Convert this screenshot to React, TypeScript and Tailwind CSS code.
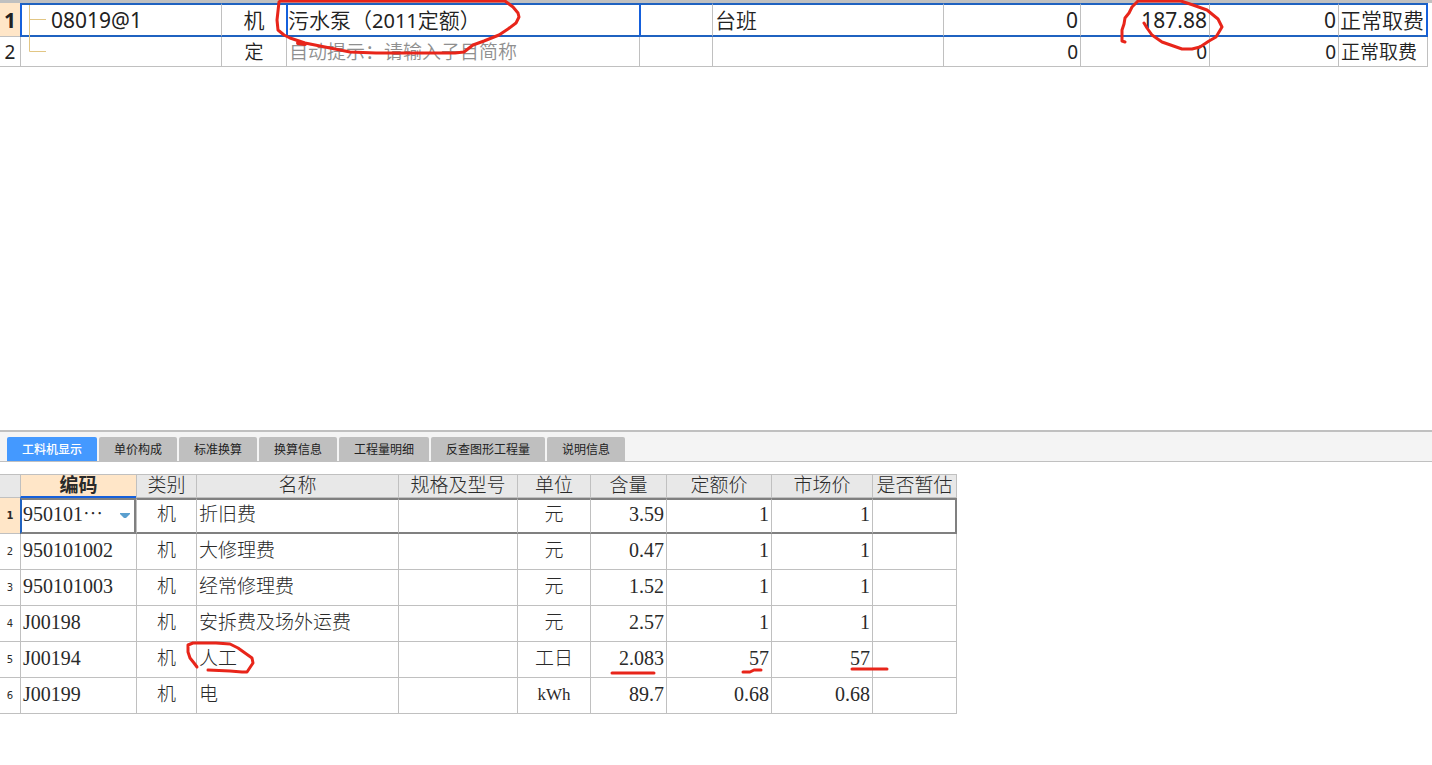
import { useState } from 'react';

const tabs = ['工料机显示', '单价构成', '标准换算', '换算信息', '工程量明细', '反查图形工程量', '说明信息'];

const columns = ['编码', '类别', '名称', '规格及型号', '单位', '含量', '定额价', '市场价', '是否暂估'];

const resources = [
  { code: '950101⋯', name: '折旧费', unit: '元', qty: '3.59', quota: '1', market: '1' },
  { code: '950101002', name: '大修理费', unit: '元', qty: '0.47', quota: '1', market: '1' },
  { code: '950101003', name: '经常修理费', unit: '元', qty: '1.52', quota: '1', market: '1' },
  { code: 'J00198', name: '安拆费及场外运费', unit: '元', qty: '2.57', quota: '1', market: '1' },
  { code: 'J00194', name: '人工', unit: '工日', qty: '2.083', quota: '57', market: '57' },
  { code: 'J00199', name: '电', unit: 'kWh', qty: '89.7', quota: '0.68', market: '0.68' },
];

function ItemTable() {
  const sel = 'border-y-2 border-y-[#1f62c0] border-l border-l-[#c0c0c0]';
  const selBox = 'border-y-2 border-l-2 border-y-[#1f62c0] border-l-[#1560dc]';
  const cell = 'border-b border-l border-[#c0c0c0]';
  return (
    <div className="border-t-3 border-[#c0c0c0] pr-1">
      <table className="w-full table-fixed border-separate border-spacing-0 whitespace-nowrap text-[#222] font-['Noto_Sans','Noto_Sans_CJK_SC',sans-serif]">
        <colgroup>
          <col className="w-[20px]" />
          <col className="w-[201px]" />
          <col className="w-[65px]" />
          <col />
          <col className="w-[73px]" />
          <col className="w-[231px]" />
          <col className="w-[137px]" />
          <col className="w-[129px]" />
          <col className="w-[129px]" />
          <col className="w-[90px]" />
        </colgroup>
        <tbody className="leading-7">
          <tr className="h-[34px] text-[21px]">
            <th scope="row" className="border-b border-[#c0c0c0] bg-[#ffe6c8] p-0 font-bold">1</th>
            <td className={`${selBox} relative p-0 pl-[29px]`}>
              <svg aria-hidden="true" className="absolute top-0 left-[7px]" width="18" height="48" fill="none" stroke="#e2c684">
                <path d="M0.5 0V46.5H17M0.5 14.5H17" />
              </svg>
              08019@1
            </td>
            <td className={`${sel} p-0 text-center font-[350]`}>机</td>
            <td className={`${selBox} p-0 font-[350]`}>污水泵（<span className="text-[20px] font-normal">2011</span>定额）</td>
            <td className={`${selBox} p-0`} />
            <td className={`${sel} p-0 pl-[2px] font-[350]`}>台班</td>
            <td className={`${sel} p-0 pr-[2px] text-right`}>0</td>
            <td className={`${sel} p-0 pr-[2px] text-right`}>187.88</td>
            <td className={`${sel} p-0 pr-[2px] text-right`}>0</td>
            <td className="border-y-2 border-r-2 border-l border-y-[#1f62c0] border-r-[#1560dc] border-l-[#c0c0c0] p-0 pl-px font-[350]">正常取费</td>
          </tr>
          <tr className="h-[30px] text-[19px]">
            <th scope="row" className="border-b border-[#c0c0c0] p-0 font-normal">2</th>
            <td className={`${cell} p-0`} />
            <td className={`${cell} p-0 text-center font-[350]`}>定</td>
            <td className={`${cell} p-0 pl-[2px]`}>
              <input aria-label="子目简称" placeholder="自动提示：请输入子目简称" className="block h-7 w-full bg-transparent p-0 font-[350] outline-none placeholder:text-[#8f8f8f]" />
            </td>
            <td className={`${cell} p-0`} />
            <td className={`${cell} p-0`} />
            <td className={`${cell} p-0 pr-[2px] text-right`}>0</td>
            <td className={`${cell} p-0 pr-[2px] text-right`}>0</td>
            <td className={`${cell} p-0 pr-[2px] text-right`}>0</td>
            <td className={`${cell} border-r p-0 pl-[2px] font-[350]`}>正常取费</td>
          </tr>
        </tbody>
      </table>
    </div>
  );
}

function ResourceTable() {
  return (
    <table className="mt-3 table-fixed w-[957px] border-separate border-spacing-0 whitespace-nowrap text-[#2a2a2a] font-['Liberation_Serif','Noto_Sans_CJK_SC',serif]">
      <colgroup>
        <col className="w-[20px]" />
        <col className="w-[116px]" />
        <col className="w-[60px]" />
        <col className="w-[202px]" />
        <col className="w-[119px]" />
        <col className="w-[73px]" />
        <col className="w-[76px]" />
        <col className="w-[105px]" />
        <col className="w-[101px]" />
        <col className="w-[85px]" />
      </colgroup>
      <thead className="text-[19px] leading-5 font-light">
        <tr className="h-6">
          <td className="border-y border-[#c0c0c0] bg-[#e8e8e8] p-0" />
          {columns.map((c, i) => (
            <th
              key={c}
              scope="col"
              className={
                i === 0
                  ? 'border-t border-b-2 border-l border-[#c0c0c0] border-b-[#1560dc] bg-[#ffe6c8] p-0 font-bold'
                  : 'border-y border-l border-[#c0c0c0] bg-[#e8e8e8] p-0 font-light last:border-r'
              }
            >
              {c}
            </th>
          ))}
        </tr>
      </thead>
      <tbody className="text-[19px] leading-7 font-light">
        {resources.map((r, i) => {
          const on = i === 0;
          const td = on ? 'border-y-2 border-y-[#808080] border-l border-l-[#c0c0c0]' : 'border-b border-l border-[#c0c0c0]';
          const num = 'p-0 pr-[2px] pb-1 text-right text-[20px]';
          return (
            <tr key={r.code} className="h-9">
              <th
                scope="row"
                className={
                  on
                    ? "border-b border-[#c0c0c0] bg-[#ffe6c8] p-0 text-[10px] font-bold font-['DejaVu_Sans',sans-serif]"
                    : "border-b border-[#c0c0c0] p-0 text-[10px] font-normal font-['DejaVu_Sans',sans-serif]"
                }
              >
                {i + 1}
              </th>
              {on ? (
                <td className="relative border-2 border-[#808080] border-l-[#1f62c0] p-0 pb-1">
                  <select aria-label="编码" className="block h-7 w-full appearance-none bg-transparent p-0 pl-px text-[20px] leading-7 outline-none">
                    <option>{r.code}</option>
                  </select>
                  <svg aria-hidden="true" className="pointer-events-none absolute top-[13px] right-1" width="10" height="6">
                    <path d="M0 0H10V1L6 5H4L0 1Z" fill="#5a9fcf" />
                  </svg>
                </td>
              ) : (
                <td className={`${td} p-0 pb-1 pl-[2px] text-[20px]`}>{r.code}</td>
              )}
              <td className={`${td} p-0 pb-[2px] text-center`}>机</td>
              <td className={`${td} p-0 pb-[2px] pl-[2px]`}>{r.name}</td>
              <td className={`${td} p-0`} />
              <td className={r.unit === 'kWh' ? `${td} p-0 pb-[2px] text-center text-[17px]` : `${td} p-0 pb-[2px] text-center`}>{r.unit}</td>
              <td className={`${td} ${num}`}>{r.qty}</td>
              <td className={`${td} ${num}`}>{r.quota}</td>
              <td className={`${td} ${num}`}>{r.market}</td>
              <td
                className={
                  on
                    ? 'border-y-2 border-r-2 border-l border-[#808080] border-l-[#c0c0c0] p-0'
                    : 'border-x border-b border-[#c0c0c0] p-0'
                }
              />
            </tr>
          );
        })}
      </tbody>
    </table>
  );
}

function InkMarks() {
  return (
    <svg
      aria-hidden="true"
      className="pointer-events-none absolute top-0 left-0"
      width="1432"
      height="765"
      fill="none"
      stroke="#e8251a"
      strokeWidth="3"
      strokeLinecap="round"
      strokeLinejoin="round"
    >
      <path d="M280 1H505L513 7L518 13L519 17L516 23L508 29L499 35L484 41L473 45L464 52L455 53L376 53L350 52L330 48L305 43L290 38L284 35L278 30L277 20L279 2" />
      <path strokeWidth="4" d="M298 43L305 44" />
      <path d="M1125 42L1122 41L1122 30L1124 24L1125 18L1129 13L1132 7L1138 1H1181L1193 5L1207 10L1218 19L1222 27L1216 37L1209 41L1200 47L1192 49L1182 49L1162 42L1152 35L1147 28L1144 23" />
      <path d="M197 667L194 663L190 658L188 652V645L193 643H216L230 644L238 648L252 658L253 663L247 672H242L230 671L208 670" />
      <path d="M612 673H654M743 672H750L754 670H761M852 669H887" />
    </svg>
  );
}

export default function App() {
  const [active, setActive] = useState(0);
  return (
    <div className="relative flex min-h-screen flex-col overflow-hidden bg-white">
      <main className="flex-1">
        <ItemTable />
      </main>
      <section className="min-h-[335px] border-t-2 border-[#c0c0c0]">
        <div role="tablist" className="flex h-[30px] items-end gap-[2px] border-b border-[#c0c0c0] bg-[#f4f4f4] pl-[7px] font-['Noto_Sans_CJK_SC',sans-serif]">
          {tabs.map((t, i) => (
            <button
              key={t}
              type="button"
              role="tab"
              aria-selected={i === active}
              onClick={() => setActive(i)}
              className={
                i === active
                  ? 'h-6 rounded-t-xs bg-[#4499ff] px-[15px] text-xs font-medium text-white'
                  : 'h-6 rounded-t-xs bg-[#bfbfbf] px-[15px] text-xs text-[#222]'
              }
            >
              {t}
            </button>
          ))}
        </div>
        <ResourceTable />
      </section>
      <InkMarks />
    </div>
  );
}
